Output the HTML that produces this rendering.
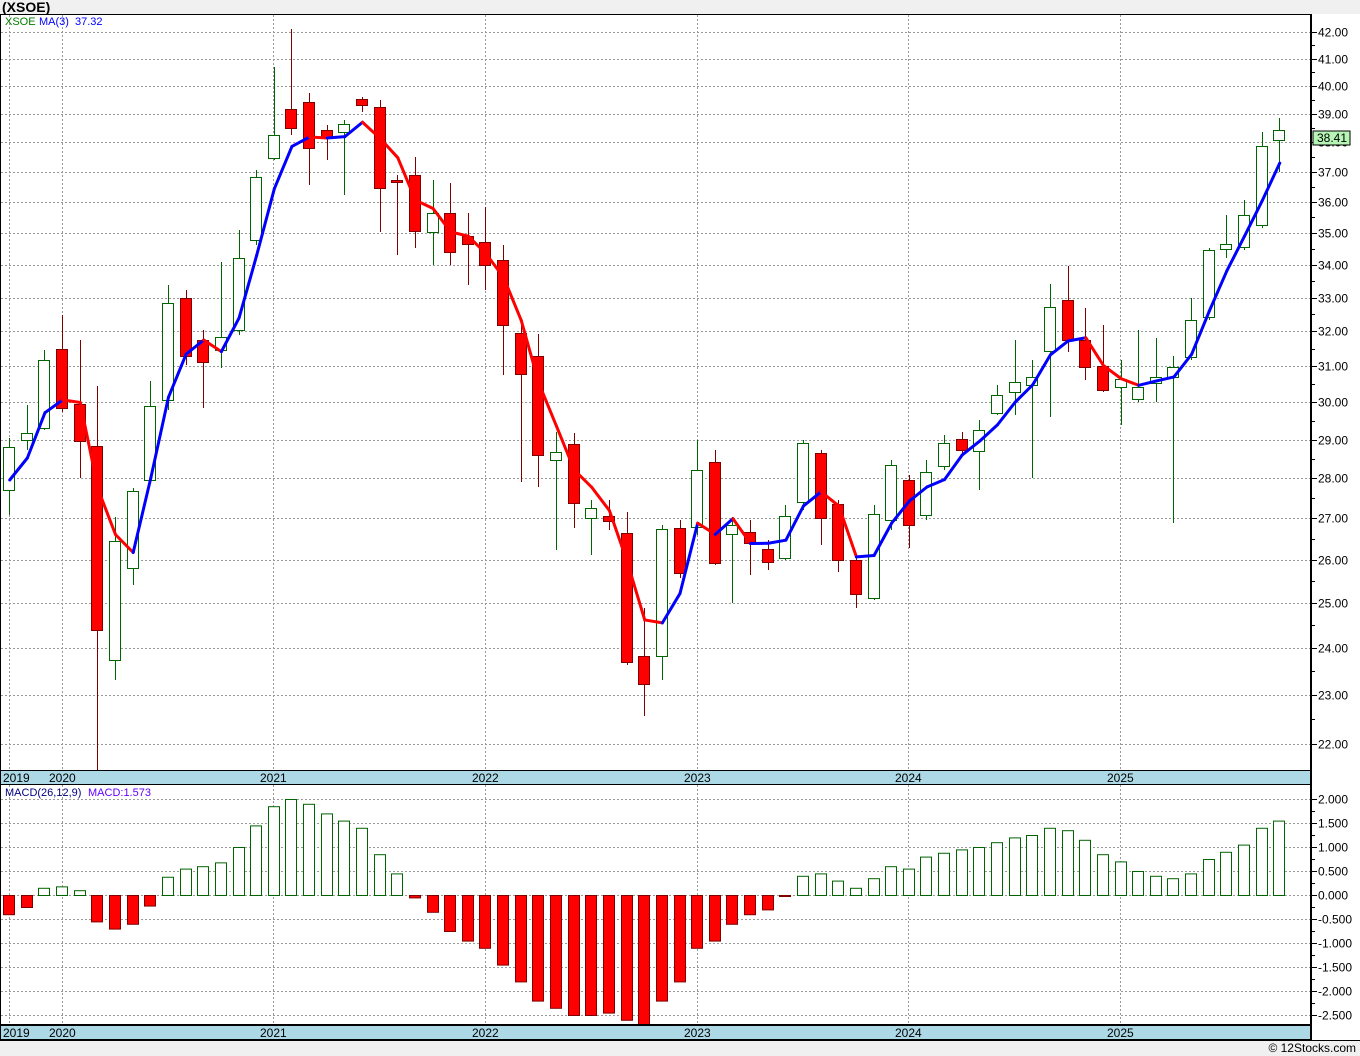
<!DOCTYPE html>
<html><head><meta charset="utf-8">
<style>
html,body{margin:0;padding:0;background:#f0f0f0;}
body{width:1360px;height:1056px;overflow:hidden;position:relative;font-family:"Liberation Sans","DejaVu Sans",sans-serif;}
svg{position:absolute;left:0;top:0;}
</style></head><body>
<svg id="c" width="1360" height="1056" xmlns="http://www.w3.org/2000/svg" font-family="Liberation Sans, DejaVu Sans, sans-serif">
<rect x="0" y="14" width="1360" height="1027" fill="#fff"/>
<text x="2" y="12" font-size="14" font-weight="bold" fill="#000">(XSOE)</text>
<g id="grid" stroke="#999" stroke-width="1" stroke-dasharray="2,2"></g>
<g id="cand"></g>
<g id="ma"></g>
<g id="macd"></g>
<rect x="0.5" y="14.5" width="1310" height="756" fill="none" stroke="#000"/>
<rect x="0.5" y="770.5" width="1310" height="14" fill="#add8e6" stroke="#000"/>
<rect x="0.5" y="784.5" width="1310" height="240" fill="none" stroke="#000"/>
<rect x="0.5" y="1025.5" width="1310" height="14" fill="#add8e6" stroke="#000"/>
<line x1="1311.5" y1="14" x2="1311.5" y2="1040" stroke="#000"/>
<line x1="0" y1="1040.5" x2="1360" y2="1040.5" stroke="#000"/>
<g font-size="12" fill="#000">
<text x="3" y="782">2019</text><text x="49" y="782">2020</text><text x="260" y="782">2021</text><text x="472" y="782">2022</text><text x="684" y="782">2023</text><text x="895" y="782">2024</text><text x="1107" y="782">2025</text>
<text x="3" y="1037">2019</text><text x="49" y="1037">2020</text><text x="260" y="1037">2021</text><text x="472" y="1037">2022</text><text x="684" y="1037">2023</text><text x="895" y="1037">2024</text><text x="1107" y="1037">2025</text>
</g>
<text x="5" y="25" font-size="11" fill="#008000">XSOE</text>
<text x="39" y="25" font-size="11" fill="#0000ff">MA(3)</text>
<text x="75" y="25" font-size="11" fill="#0000ff">37.32</text>
<text x="5" y="796" font-size="11" fill="#000080">MACD(26,12,9)</text>
<text x="88" y="796" font-size="11" fill="#6600ff">MACD:1.573</text>
<g id="axis" font-size="12" fill="#000"></g>
<rect x="1313" y="131" width="37" height="14" fill="#b6f5b6" stroke="#000"/>
<text x="1317" y="142" font-size="12" fill="#000">38.41</text>
<text x="1356" y="1052" font-size="12" fill="#000" text-anchor="end">© 12Stocks.com</text>
</svg>
<script>
var NS="http://www.w3.org/2000/svg";
function el(p,t,a){var e=document.createElementNS(NS,t);for(var k in a)e.setAttribute(k,a[k]);p.appendChild(e);return e;}
function py(p){return 32+1101*(Math.log(42)-Math.log(p));}
function pfy(y){return Math.exp(Math.log(42)-(y-32)/1101);}
var grid=document.getElementById('grid'),axis=document.getElementById('axis');
for(var p=22;p<=42;p++){var y=Math.round(py(p))+0.5;
 el(grid,'line',{x1:1,y1:y,x2:1311,y2:y});
 el(axis,'line',{x1:1311,y1:y,x2:1317,y2:y,stroke:'#000'});
 var t=el(axis,'text',{x:1318,y:y+4});t.textContent=p.toFixed(2);
 var ym=Math.round(py(p+0.5))+0.5; if(p<42) el(axis,'line',{x1:1311,y1:ym,x2:1315,y2:ym,stroke:'#000'});}
[9,62,273,485,697,908,1120].forEach(function(x){el(grid,'line',{x1:x+0.5,y1:15,x2:x+0.5,y2:770});el(grid,'line',{x1:x+0.5,y1:785,x2:x+0.5,y2:1025});});
var zero=895,sc=48;
for(var v=-2.5;v<=2.0001;v+=0.5){var y=Math.round(zero-v*sc)+0.5;
 el(grid,'line',{x1:1,y1:y,x2:1311,y2:y});
 el(axis,'line',{x1:1311,y1:y,x2:1317,y2:y,stroke:'#000'});
 var s=v.toFixed(3);var t=el(axis,'text',{x:1318,y:y+4});t.textContent=(v>=0?' ':'')+s;
 if(v<2) {var ym=Math.round(zero-(v+0.25)*sc)+0.5;el(axis,'line',{x1:1311,y1:ym,x2:1315,y2:ym,stroke:'#000'});}}
var C=[[1,447,490,438,515],[1,433,440,405,450],[1,360,428,350,430],[0,349,408,315,412],[0,404,441,340,478],[0,446,630,386,770],[1,541,660,517,680],[1,491,568,488,585],[1,406,480,381,480],[1,303,400,285,410],
[0,298,356,290,365],[0,340,362,330,408],[1,337,350,262,368],[1,258,330,230,335],[1,177,240,170,245],[1,135,158,67,160],[0,109,128,29,135],[0,102,148,93,185],[0,130,138,125,160],[1,124,132,120,195],
[0,99,105,97,112],[0,107,188,100,232],[0,180,182,175,255],[0,175,231,157,248],[1,213,232,180,265],[0,213,252,183,265],[0,236,244,213,285],[0,242,265,207,290],[0,260,325,245,375],[0,333,374,322,482],
[0,356,455,334,487],[1,452,460,432,550],[0,444,503,433,528],[1,508,518,500,555],[0,516,521,500,530],[0,533,662,512,665],[0,656,684,608,716],[1,529,656,525,680],[0,528,573,520,578],[1,470,527,440,535],
[0,462,563,450,565],[1,525,534,517,603],[0,532,543,520,575],[0,549,562,540,570],[1,516,558,505,560],[1,443,502,440,510],[0,453,518,450,545],[0,504,560,500,572],[0,560,594,555,608],[1,514,598,505,600],
[1,465,520,460,530],[0,480,525,475,548],[1,472,515,460,520],[1,443,466,435,470],[0,439,450,432,455],[1,430,451,420,490],[1,395,413,385,415],[1,382,392,340,415],[1,377,385,360,478],[1,307,351,284,417],
[0,300,340,266,352],[0,340,367,308,380],[0,366,390,325,392],[1,379,387,360,425],[1,387,399,330,402],[1,377,383,338,402],[1,367,377,356,523],[1,320,357,298,360],[1,250,317,248,320],[1,244,249,215,258],
[1,215,247,200,250],[1,146,225,132,228],[1,130,140,118,172]];
var g=document.getElementById('cand');
function X(i){return 9.2+17.64*i;}
var closes=[];
C.forEach(function(c,i){var x=Math.round(X(i));
 var col=c[0]?'#006400':'#800000';
 el(g,'line',{x1:x+0.5,y1:c[3],x2:x+0.5,y2:c[4],stroke:col,'stroke-width':1});
 el(g,'rect',{x:x-5.5,y:c[1]+0.5,width:11,height:Math.max(1,c[2]-c[1]),fill:c[0]?'#fff':'#ff0000',stroke:c[0]?'#006400':'#800000','stroke-width':1});
 closes.push(pfy(c[0]?c[1]:c[2]));});
var ma=document.getElementById('ma'),pts=[];
for(var i=0;i<C.length;i++){var a=closes.slice(Math.max(0,i-2),i+1);var m=a.reduce(function(s,v){return s+v;},0)/a.length;pts.push([X(i)+0.5,py(m)]);}
pts[0][1]=480;pts[1][1]=458;
for(var i=1;i<pts.length;i++){var up=pts[i][1]<=pts[i-1][1];
 el(ma,'line',{x1:pts[i-1][0],y1:pts[i-1][1],x2:pts[i][0],y2:pts[i][1],stroke:up?'#0000ff':'#ff0000','stroke-width':3,'stroke-linecap':'round'});}
var M=[-0.4,-0.25,0.15,0.18,0.1,-0.55,-0.7,-0.6,-0.22,0.38,0.55,0.6,0.68,1.0,1.45,1.85,2.0,1.9,1.7,1.55,1.4,0.85,0.45,-0.05,-0.35,-0.75,-0.95,-1.1,-1.45,-1.8,-2.2,-2.35,-2.5,-2.5,-2.45,-2.6,-2.7,-2.2,-1.8,-1.1,-0.95,-0.6,-0.4,-0.3,-0.02,0.4,0.45,0.3,0.15,0.35,0.6,0.55,0.8,0.88,0.95,1.0,1.1,1.2,1.25,1.4,1.35,1.15,0.85,0.7,0.5,0.4,0.35,0.45,0.75,0.9,1.05,1.4,1.55];
var mg=document.getElementById('macd');
M.forEach(function(v,i){var x=Math.round(X(i));var h=Math.max(1,Math.abs(v)*sc);var y=v>=0?zero-h:zero;
 if(v<0&&y+h>1024)h=1024-y;
 el(mg,'rect',{x:x-5.5,y:y+0.5,width:11,height:h,fill:v>=0?'#fff':'#ff0000',stroke:v>=0?'#006400':'#800000'});});
</script>
</body></html>
